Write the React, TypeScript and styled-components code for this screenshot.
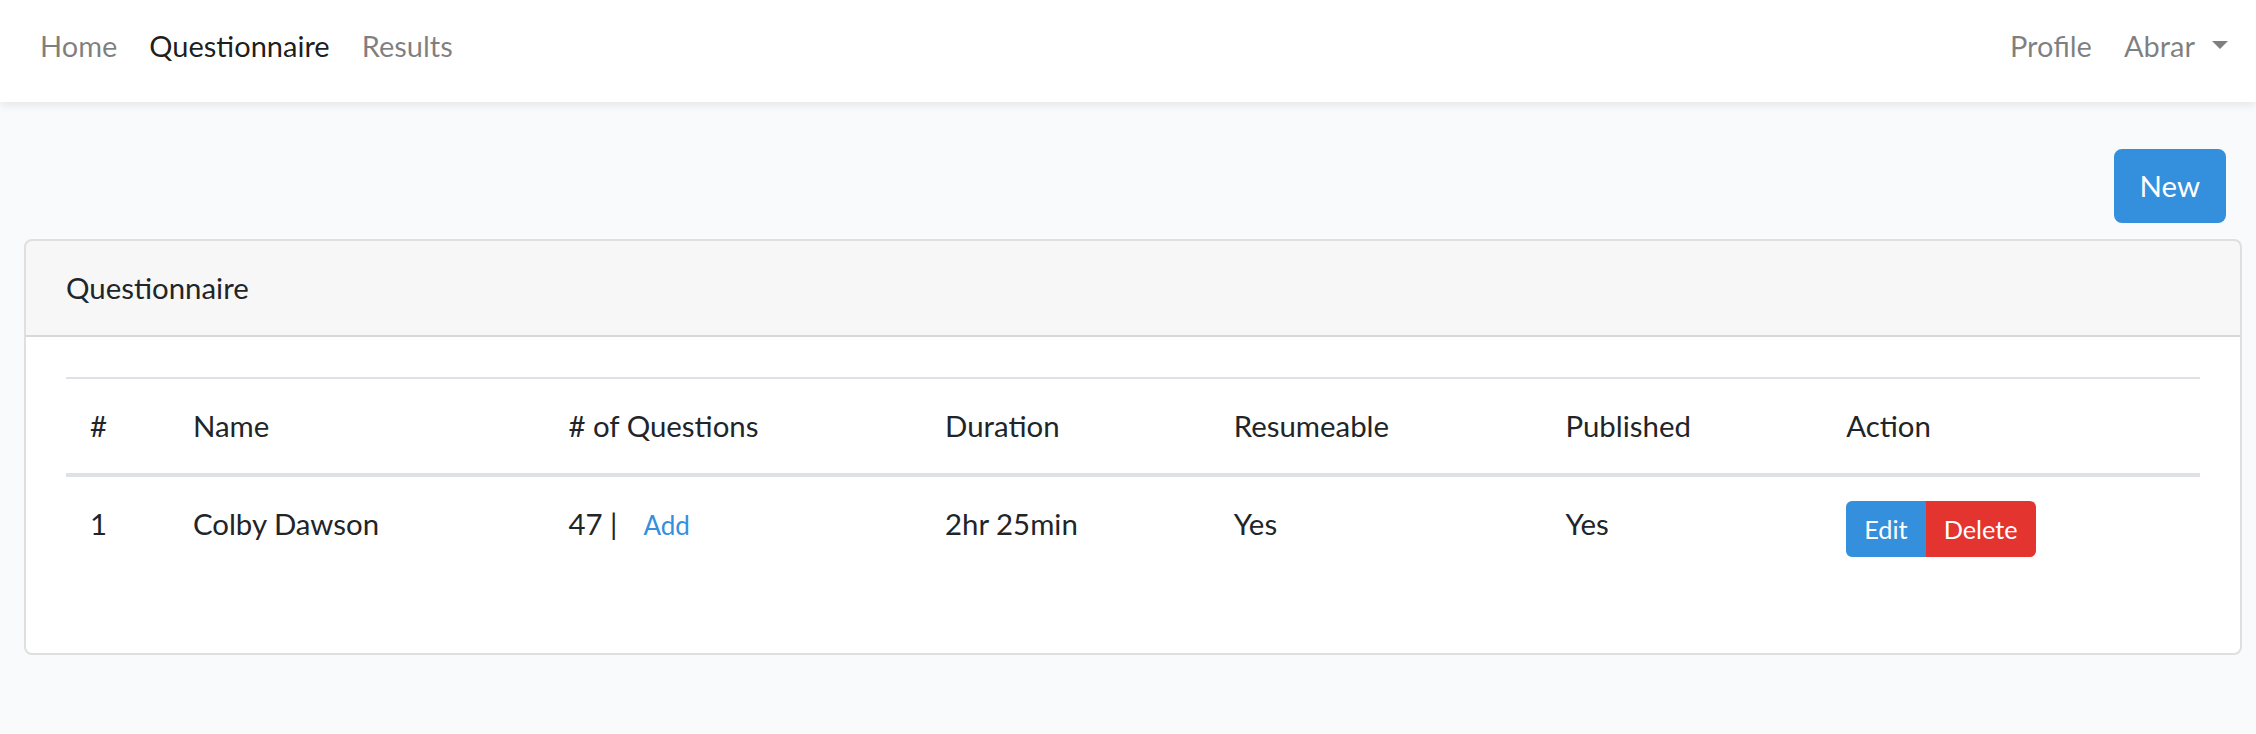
import styled, { createGlobalStyle } from "styled-components";

const GlobalStyle = createGlobalStyle`
  html, body {
    margin: 0;
    padding: 0;
  }
  body {
    background: #f8fafc;
    font-family: Lato, "Noto Sans", sans-serif;
    font-size: 29.4px;
    line-height: 46px;
    color: #212529;
  }
  * {
    box-sizing: border-box;
  }
`;

const Navbar = styled.nav`
  height: 102px;
  background: #fff;
  box-shadow: 0 4px 8px rgba(0, 0, 0, 0.075);
  display: flex;
  justify-content: space-between;
  align-items: center;
  padding: 0 12px 10px 24px;
  font-size: 29px;
`;

const NavGroup = styled.div`
  display: flex;
  align-items: center;
`;

const NavLink = styled.a<{ $active?: boolean }>`
  padding: 0 16px;
  color: ${(p) => (p.$active ? "rgba(0, 0, 0, 0.9)" : "rgba(0, 0, 0, 0.5)")};
  text-decoration: none;
  display: flex;
  align-items: center;
`;

const Caret = styled.span`
  display: inline-block;
  margin-left: 17px;
  border-top: 8.6px solid rgba(0, 0, 0, 0.5);
  border-left: 8.2px solid transparent;
  border-right: 8.2px solid transparent;
  margin-bottom: 2px;
`;

const Main = styled.main`
  padding: 47px 14px 48px 24px;
`;

const Toolbar = styled.div`
  display: flex;
  justify-content: flex-end;
  padding-right: 16px;
  margin-bottom: 16px;
`;

const Button = styled.button<{ $color: string; $small?: boolean }>`
  font-family: inherit;
  font-size: ${(p) => (p.$small ? "25.3px" : "29.4px")};
  line-height: ${(p) => (p.$small ? "38px" : "46px")};
  padding: ${(p) => (p.$small ? "7px 16px" : "12px 24px")};
  border: 2px solid ${(p) => p.$color};
  background: ${(p) => p.$color};
  color: #fff;
  border-radius: ${(p) => (p.$small ? "6px" : "8px")};
  cursor: pointer;
`;

const Card = styled.section`
  background: #fff;
  border: 2px solid rgba(0, 0, 0, 0.125);
  border-radius: 8px;
  overflow: hidden;
`;

const CardHeader = styled.div`
  background: rgba(0, 0, 0, 0.03);
  border-bottom: 2px solid rgba(0, 0, 0, 0.125);
  padding: 24px 40px;
`;

const CardBody = styled.div`
  padding: 40px;
`;

const Table = styled.table`
  width: 100%;
  border-collapse: collapse;
  margin-bottom: 32px;
`;

const Th = styled.th<{ $w: number }>`
  width: ${(p) => p.$w}px;
  text-align: left;
  font-weight: 400;
  padding: 24px;
  border-top: 2px solid #dee2e6;
  border-bottom: 4px solid #dee2e6;
  vertical-align: top;
`;

const Td = styled.td`
  padding: 24px;
  vertical-align: top;
`;

const AddLink = styled.a`
  font-size: 26px;
  color: #3490dc;
  text-decoration: none;
  padding: 0 16px 0 26px;
`;

const BtnGroup = styled.div`
  display: inline-flex;
  button:first-child {
    border-top-right-radius: 0;
    border-bottom-right-radius: 0;
  }
  button:last-child {
    border-top-left-radius: 0;
    border-bottom-left-radius: 0;
  }
`;

const columns = [
  { label: "#", w: 103 },
  { label: "Name", w: 376 },
  { label: "# of Questions", w: 377 },
  { label: "Duration", w: 289 },
  { label: "Resumeable", w: 332 },
  { label: "Published", w: 281 },
  { label: "Action", w: 378 },
];

export default function App() {
  return (
    <>
      <GlobalStyle />
      <Navbar>
        <NavGroup>
          <NavLink href="#">Home</NavLink>
          <NavLink href="#" $active>
            Questionnaire
          </NavLink>
          <NavLink href="#">Results</NavLink>
        </NavGroup>
        <NavGroup>
          <NavLink href="#">Profile</NavLink>
          <NavLink href="#">
            Abrar
            <Caret />
          </NavLink>
        </NavGroup>
      </Navbar>
      <Main>
        <Toolbar>
          <Button $color="#3490dc">New</Button>
        </Toolbar>
        <Card>
          <CardHeader>Questionnaire</CardHeader>
          <CardBody>
            <Table>
              <thead>
                <tr>
                  {columns.map((c) => (
                    <Th key={c.label} $w={c.w}>
                      {c.label}
                    </Th>
                  ))}
                </tr>
              </thead>
              <tbody>
                <tr>
                  <Td>1</Td>
                  <Td>Colby Dawson</Td>
                  <Td>
                    47 |<AddLink href="#">Add</AddLink>
                  </Td>
                  <Td>2hr 25min</Td>
                  <Td>Yes</Td>
                  <Td>Yes</Td>
                  <Td>
                    <BtnGroup>
                      <Button $color="#3490dc" $small>
                        Edit
                      </Button>
                      <Button $color="#e3342f" $small>
                        Delete
                      </Button>
                    </BtnGroup>
                  </Td>
                </tr>
              </tbody>
            </Table>
          </CardBody>
        </Card>
      </Main>
    </>
  );
}
